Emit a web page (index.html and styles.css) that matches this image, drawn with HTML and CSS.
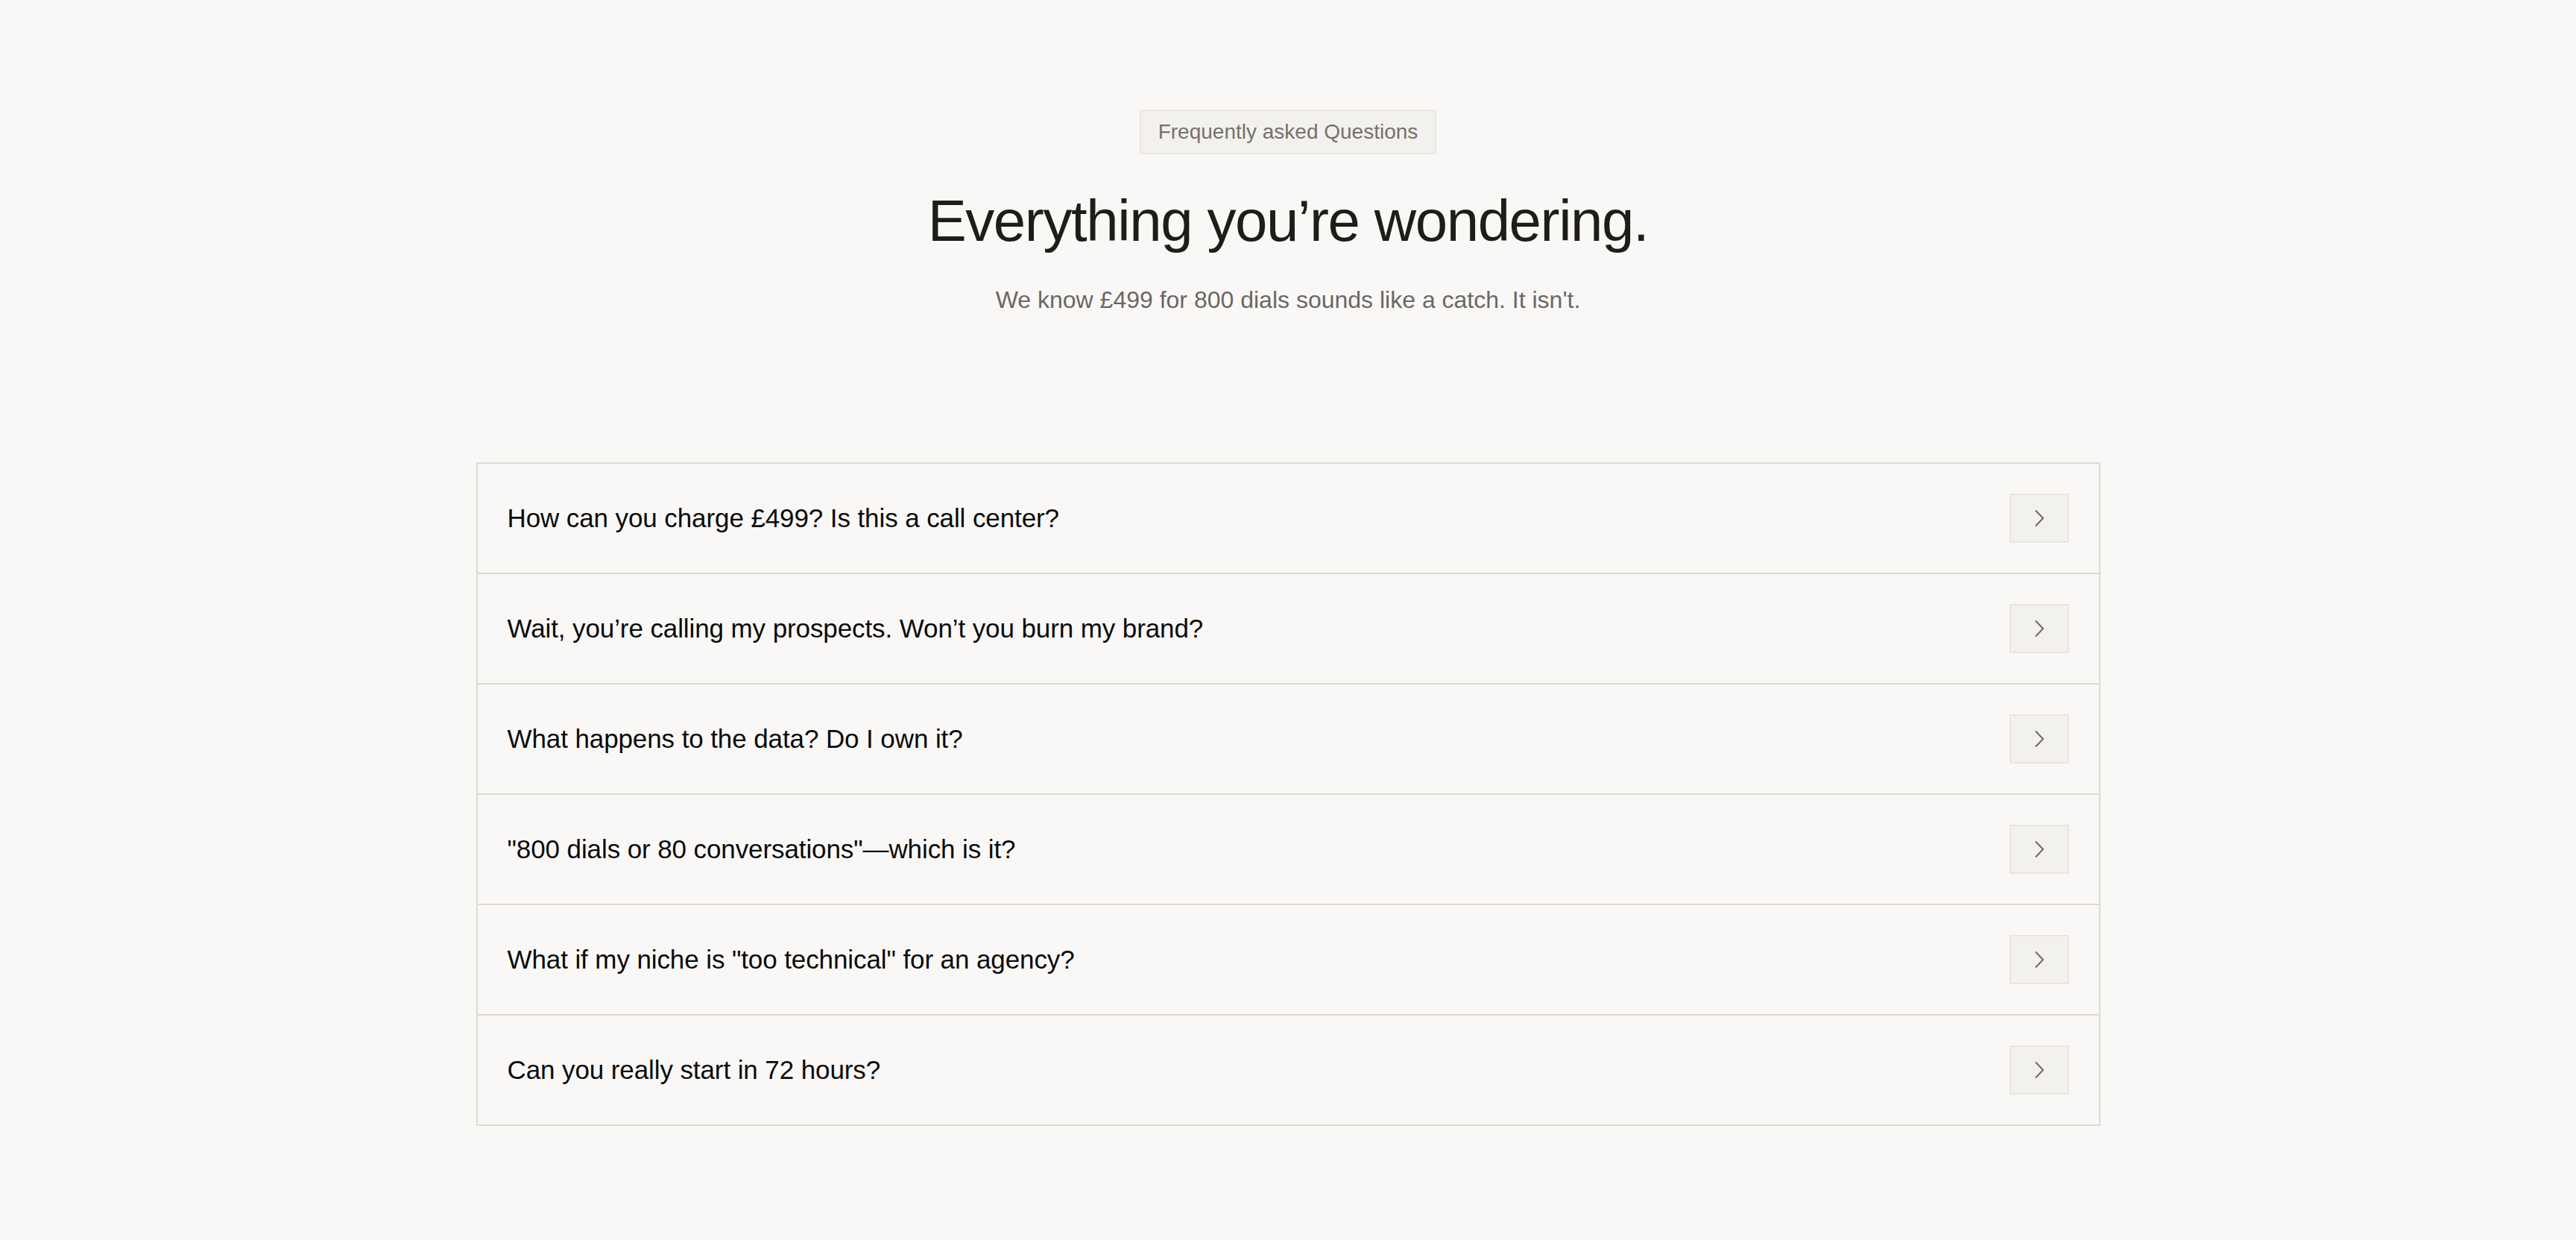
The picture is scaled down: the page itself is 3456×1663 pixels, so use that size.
FILE: index.html
```html
<!DOCTYPE html>
<html lang="en">
<head>
<meta charset="utf-8">
<title>FAQ</title>
<link rel="stylesheet" href="styles.css">
</head>
<body>
<section class="faq">
  <header class="faq-head">
    <span class="badge">Frequently asked Questions</span>
    <h2 class="title">Everything you’re wondering.</h2>
    <p class="lede">We know £499 for 800 dials sounds like a catch. It isn't.</p>
  </header>

  <div class="faq-list">
    <div class="faq-item">
      <span class="q">How can you charge £499? Is this a call center?</span>
      <span class="toggle"><svg viewBox="0 0 14 24" width="14" height="24"><path d="M2 1.5 L12 12 L2 22.5"/></svg></span>
    </div>
    <div class="faq-item">
      <span class="q">Wait, you’re calling my prospects. Won’t you burn my brand?</span>
      <span class="toggle"><svg viewBox="0 0 14 24" width="14" height="24"><path d="M2 1.5 L12 12 L2 22.5"/></svg></span>
    </div>
    <div class="faq-item">
      <span class="q">What happens to the data? Do I own it?</span>
      <span class="toggle"><svg viewBox="0 0 14 24" width="14" height="24"><path d="M2 1.5 L12 12 L2 22.5"/></svg></span>
    </div>
    <div class="faq-item">
      <span class="q">"800 dials or 80 conversations"—which is it?</span>
      <span class="toggle"><svg viewBox="0 0 14 24" width="14" height="24"><path d="M2 1.5 L12 12 L2 22.5"/></svg></span>
    </div>
    <div class="faq-item">
      <span class="q">What if my niche is "too technical" for an agency?</span>
      <span class="toggle"><svg viewBox="0 0 14 24" width="14" height="24"><path d="M2 1.5 L12 12 L2 22.5"/></svg></span>
    </div>
    <div class="faq-item">
      <span class="q">Can you really start in 72 hours?</span>
      <span class="toggle"><svg viewBox="0 0 14 24" width="14" height="24"><path d="M2 1.5 L12 12 L2 22.5"/></svg></span>
    </div>
  </div>
</section>
</body>
</html>
```
FILE: styles.css
```css
html, body {
  margin: 0;
  padding: 0;
  background: #f9f8f6;
}

body {
  font-family: "Liberation Sans", Arial, Helvetica, sans-serif;
  color: #1f1d1a;
}

.faq {
  padding: 147px 0 150px;
  display: flex;
  flex-direction: column;
  align-items: center;
}

.faq-head {
  display: flex;
  flex-direction: column;
  align-items: center;
}

.badge {
  box-sizing: border-box;
  height: 60px;
  padding: 0 23px;
  border: 2px solid #ebe8e4;
  background: #f3f1ee;
  color: #75716d;
  font-size: 28px;
  line-height: 56px;
}

.title {
  margin: 46px 0 0;
  font-size: 78px;
  line-height: 86px;
  font-weight: 400;
  letter-spacing: -1.4px;
  color: #1f1d1a;
}

.lede {
  margin: 39px 0 0;
  font-size: 32px;
  line-height: 48px;
  color: #6b6764;
}

.faq-list {
  margin-top: 194px;
  width: 2179px;
  box-sizing: border-box;
  border: 2px solid #dddad6;
  display: flex;
  flex-direction: column;
}

.faq-item {
  height: 146px;
  padding: 0 40px;
  display: flex;
  align-items: center;
  justify-content: space-between;
  border-bottom: 2px solid #dddad6;
}

.faq-item:last-child {
  border-bottom: none;
}

.q {
  font-size: 35px;
  line-height: 42px;
  letter-spacing: -0.1px;
  color: #0b0b0b;
}

.toggle {
  box-sizing: border-box;
  width: 80px;
  height: 66px;
  border: 2px solid #e9e6e2;
  background: #f3f1ee;
  display: flex;
  align-items: center;
  justify-content: center;
}

.toggle svg {
  display: block;
  fill: none;
  stroke: #6d6965;
  stroke-width: 2;
}
```
